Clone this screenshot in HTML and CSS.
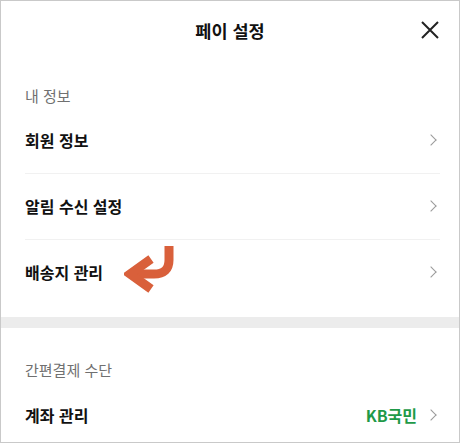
FILE: index.html
```html
<!DOCTYPE html>
<html lang="ko">
  <head>
    <meta charset="UTF-8">
    <meta name="viewport" content="width=device-width, initial-scale=1.0">
    <title>페이 설정</title>
    <link rel="stylesheet" href="styles.css">
  </head>

  <body>
    <div id="settings-screen">
      <div class="header">
        <span></span>
        <h1 class="header-title">페이 설정</h1>
        <button class="close-btn" aria-label="닫기">
          <svg width="20" height="20" viewBox="0 0 20 20">
            <path d="M2 2 L18 18 M18 2 L2 18" stroke="#222" stroke-width="2" fill="none" />
          </svg>
        </button>
      </div>

      <div class="section">
        <div class="section-label">내 정보</div>
        <div class="menu-row">
          <span class="menu-text">회원 정보</span>
          <span class="chevron"></span>
        </div>
        <div class="menu-row">
          <span class="menu-text">알림 수신 설정</span>
          <span class="chevron"></span>
        </div>
        <div class="menu-row last">
          <span class="menu-text">배송지 관리</span>
          <span class="chevron"></span>
          <!-- annotation arrow -->
          <svg class="point-arrow" width="54" height="48" viewBox="0 0 54 48">
            <path d="M45 0 V14 Q45 28 30 28 H10" stroke="#d9603b" stroke-width="9" fill="none" />
            <path d="M27 13 L6 28 L27 43" stroke="#d9603b" stroke-width="9" fill="none" />
          </svg>
        </div>
      </div>

      <div class="section-divider"></div>

      <div class="section">
        <div class="section-label">간편결제 수단</div>
        <div class="menu-row last">
          <span class="menu-text">계좌 관리</span>
          <span class="menu-value">KB국민</span>
          <span class="chevron"></span>
        </div>
      </div>
    </div>
  </body>

</html>
```

FILE: styles.css
```css
* {
  box-sizing: border-box;
  margin: 0;
  padding: 0;
}

body {
  font-family: "Noto Sans CJK KR", "Noto Sans", sans-serif;
  background: white;
}

#settings-screen {
  width: 460px;
  height: 443px;
  border: 1px solid #c9c9c9;
  background: white;
  overflow: hidden;
}

.header {
  display: grid;
  grid-template-columns: 1fr auto 1fr;
  align-items: center;
  height: 58px;
}

.header-title {
  font-size: 17.5px;
  font-weight: 700;
  color: #111;
}

.close-btn {
  justify-self: end;
  margin-right: 19px;
  width: 20px;
  height: 20px;
  border: none;
  background: none;
  display: flex;
}

.section-label {
  padding: 26px 24px 0;
  height: 49px;
  font-size: 15px;
  line-height: 22px;
  color: #707070;
}

.menu-row {
  position: relative;
  display: flex;
  align-items: center;
  height: 66px;
  margin: 0 19px 0 24px;
  padding-bottom: 2px;
  border-bottom: 1px solid #f1f1f1;
}

.menu-row.last {
  border-bottom: none;
}

.menu-text {
  flex: 1;
  font-size: 16px;
  font-weight: 700;
  color: #111;
}

.menu-value {
  font-size: 16px;
  font-weight: 700;
  color: #1f9a48;
  margin-right: 10px;
}

.chevron {
  width: 8px;
  height: 8px;
  border-top: 1.5px solid #9a9a9a;
  border-right: 1.5px solid #9a9a9a;
  transform: rotate(45deg);
  margin-right: 5px;
}

.point-arrow {
  position: absolute;
  left: 99px;
  top: 6px;
}

.section-divider {
  height: 11px;
  margin-top: 11px;
  background: #ececec;
}

.section-divider + .section .section-label {
  padding-top: 31px;
  height: 55px;
}
```
